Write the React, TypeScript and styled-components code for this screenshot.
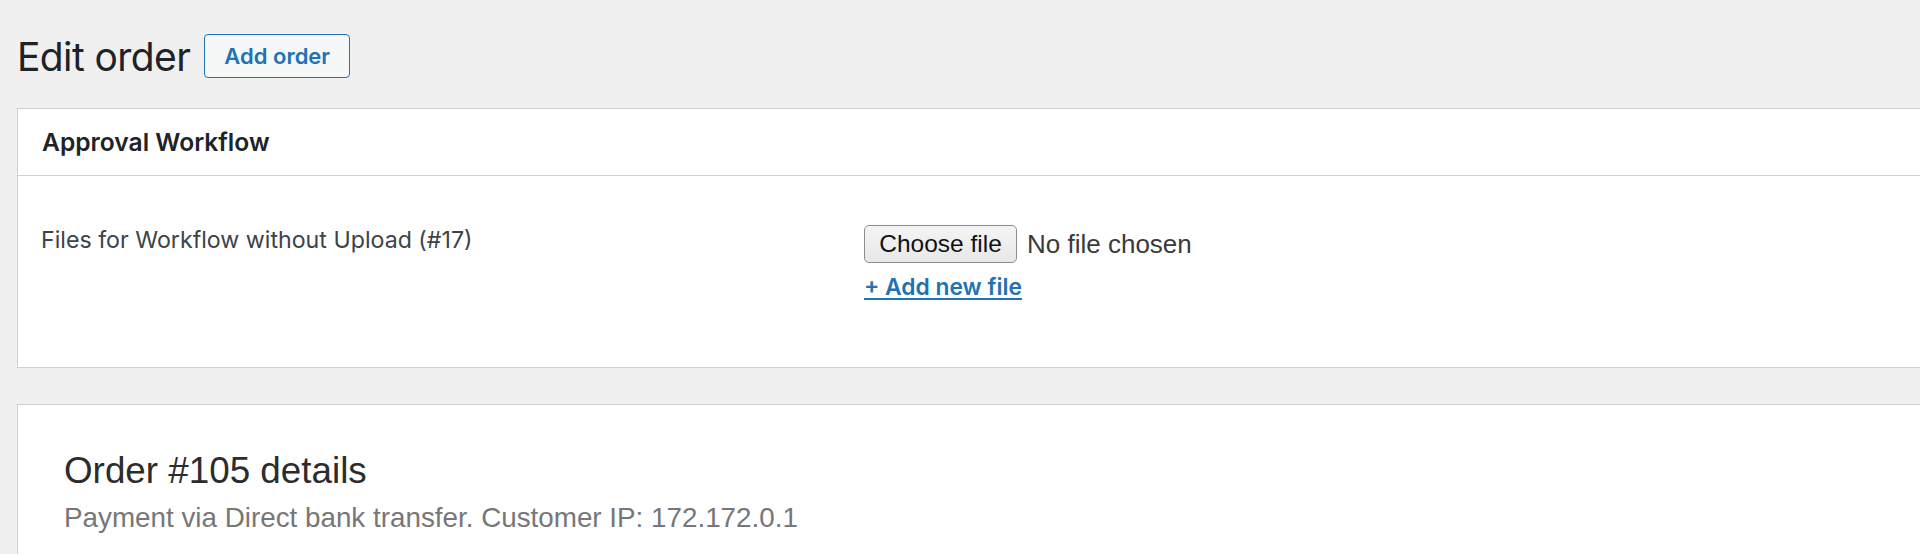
import React from "react";
import styled, { createGlobalStyle } from "styled-components";

const GlobalStyle = createGlobalStyle`
  html, body {
    margin: 0;
    padding: 0;
    background: #f0f0f1;
    overflow: hidden;
  }
  body {
    font-family: Inter, "Liberation Sans", sans-serif;
    color: #1d2327;
  }
`;

const Wrap = styled.div`
  padding-left: 17px;
  width: 1940px;
`;

const Header = styled.div`
  display: flex;
  align-items: center;
  height: 44px;
  margin: 34px 0 30px;
`;

const Title = styled.h1`
  margin: 0;
  font-size: 39px;
  font-weight: 400;
  line-height: 1;
  color: #1d2327;
  letter-spacing: -0.6px;
`;

const AddButton = styled.a`
  display: flex;
  align-items: center;
  justify-content: center;
  box-sizing: border-box;
  height: 44px;
  width: 146px;
  margin-left: 14px;
  border: 1.5px solid #2271b1;
  border-radius: 4px;
  background: #f6f7f7;
  color: #2271b1;
  font-size: 22px;
  font-weight: 600;
  text-decoration: none;
`;

const Panel = styled.div`
  background: #fff;
  border: 1px solid #d0d1d3;
  margin-bottom: 36px;
`;

const PanelHeader = styled.div`
  display: flex;
  align-items: center;
  height: 66px;
  padding: 0 24px;
  border-bottom: 1px solid #d0d1d3;
`;

const PanelTitle = styled.h2`
  margin: 0;
  font-size: 24.6px;
  font-weight: 600;
  color: #1d2327;
`;

const PanelBody = styled.div`
  display: grid;
  grid-template-columns: 823px 1fr;
  height: 191px;
  box-sizing: border-box;
  padding: 49px 0 0 23px;
`;

const FieldLabel = styled.div`
  font-size: 23.2px;
  line-height: 30px;
  color: #3c434a;
`;

const FieldControl = styled.div`
  display: flex;
  flex-direction: column;
  align-items: flex-start;
  gap: 10px;
`;

const FileRow = styled.div`
  display: flex;
  align-items: center;
  font-family: "Liberation Sans", Arial, sans-serif;
  font-size: 24px;
`;

const FileButton = styled.button`
  box-sizing: border-box;
  height: 38px;
  width: 153px;
  padding: 0;
  border: 1px solid #8d8d8d;
  border-radius: 5px;
  background: linear-gradient(#f4f4f4, #e8e8e8);
  color: #111;
  font-family: inherit;
  font-size: 24.5px;
`;

const FileName = styled.span`
  margin-left: 10px;
  font-size: 26px;
  color: #3a3a3a;
`;

const AddLink = styled.a`
  color: #2271b1;
  font-size: 22.8px;
  font-weight: 600;
  text-decoration: underline;
  text-underline-offset: 3px;
`;

const OrderPanel = styled.div`
  background: #fff;
  border: 1px solid #d0d1d3;
  height: 300px;
  padding: 44px 0 0 46px;
  font-family: "Liberation Sans", Arial, sans-serif;
`;

const OrderTitle = styled.h2`
  margin: 0;
  font-size: 36.8px;
  font-weight: 400;
  line-height: 1.2;
  color: #2c2c2c;
`;

const OrderMeta = styled.p`
  margin: 4px 0 0;
  font-size: 27.8px;
  line-height: 1.5;
  color: #777;
`;

const App = () => {
  return (
    <>
      <GlobalStyle />
      <Wrap>
        <Header>
          <Title>Edit order</Title>
          <AddButton href="#">Add order</AddButton>
        </Header>
        <Panel>
          <PanelHeader>
            <PanelTitle>Approval Workflow</PanelTitle>
          </PanelHeader>
          <PanelBody>
            <FieldLabel>Files for Workflow without Upload (#17)</FieldLabel>
            <FieldControl>
              <FileRow>
                <FileButton type="button">Choose file</FileButton>
                <FileName>No file chosen</FileName>
              </FileRow>
              <AddLink href="#">+ Add new file</AddLink>
            </FieldControl>
          </PanelBody>
        </Panel>
        <OrderPanel>
          <OrderTitle>Order #105 details</OrderTitle>
          <OrderMeta>
            Payment via Direct bank transfer. Customer IP: 172.172.0.1
          </OrderMeta>
        </OrderPanel>
      </Wrap>
    </>
  );
};

export default App;
